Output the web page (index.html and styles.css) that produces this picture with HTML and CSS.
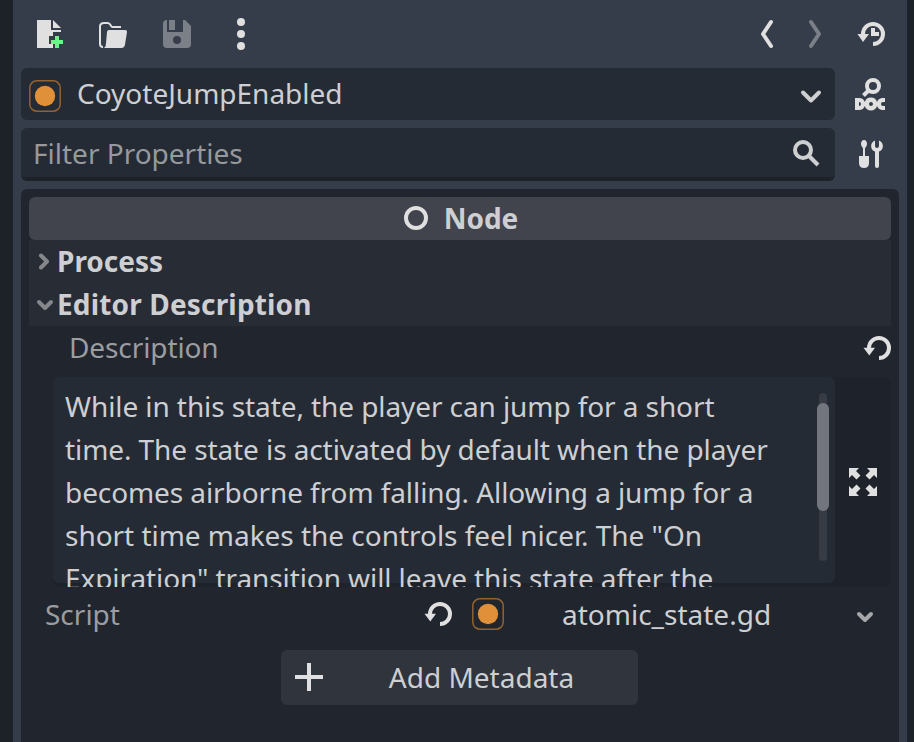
FILE: index.html
```html
<!DOCTYPE html>
<html lang="en">
<head>
<meta charset="utf-8">
<title>Inspector</title>
<link rel="stylesheet" href="styles.css">
</head>
<body>
<svg class="defs" aria-hidden="true">
  <symbol id="reload" viewBox="0 0 32 32">
    <path d="M8 16.500V16a10 10 0 1 1 10 10" fill="none" stroke="currentColor" stroke-width="4"/>
    <path d="M2.500 15.800h11.500L8.300 23.500z" fill="currentColor"/>
  </symbol>
  <symbol id="state" viewBox="0 0 32 32">
    <rect x=".8" y=".8" width="30.400" height="30.400" rx="7" fill="none" stroke="#94622f" stroke-width="1.500"/>
    <circle cx="16" cy="16" r="10.200" fill="#e09038"/>
  </symbol>
</svg>
<main class="dock">
  <header class="toolbar">
    <button class="tool"><svg class="icon" viewBox="0 0 32 32"><path d="M4 2h14v10h10v2h-8v4h-4v8h4v4H4z" fill="#e0e0e0"/><path d="M20 2v8h8z" fill="#e0e0e0"/><path d="M22 18h4v4h4v4h-4v4h-4v-4h-4v-4h4z" fill="#6cf585"/></svg></button>
    <button class="tool"><svg class="icon" viewBox="0 0 32 32"><path d="M6 29C4 29 3 28 3 26V8.500C3 6 4.500 5 7 5h3.500c2 0 2.500 1 3 2l.8 1.200c.3.500.7.800 1.500.8H24" fill="none" stroke="#e0e0e0" stroke-width="2"/><path d="M12 12h16c1.500 0 2.100.7 2 2l-2 12.500c-.4 2.300-1.400 3.500-3.500 3.500H6c2 0 2.600-1.500 2.900-3.500L10 14c.2-1.300.8-2 2-2z" fill="#e0e0e0"/></svg></button>
    <button class="tool"><svg class="icon" viewBox="0 0 32 32"><path fill="#7b7f87" fill-rule="evenodd" d="M6 2v12h16V2h2l6 6v18q0 4-4 4H6q-4 0-4-4V6q0-4 4-4zM16 18a4 4 0 1 0 0 8 4 4 0 0 0 0-8z"/><path d="M8 2h6v10H8z" fill="#7b7f87"/></svg></button>
    <button class="tool"><svg class="icon" viewBox="0 0 32 32"><g fill="#e0e0e0"><circle cx="16" cy="4" r="4"/><circle cx="16" cy="16" r="4"/><circle cx="16" cy="28" r="4"/></g></svg></button>
    <span class="spacer"></span>
    <button class="nav"><svg class="nav-icon" viewBox="0 0 16 32"><path d="M12 4L4 16l8 12" class="line"/></svg></button>
    <button class="nav nav-off"><svg class="nav-icon" viewBox="0 0 16 32"><path d="M4 4l8 12-8 12" class="line"/></svg></button>
    <button class="tool history"><svg class="icon" viewBox="0 0 32 32"><path d="M8 16a10 10 0 1 1 10 10" fill="none" stroke="#e0e0e0" stroke-width="4"/><path d="M2.500 16h11.500L8 24z" fill="#e0e0e0"/><path d="M16 10h4v4h4v4h-8z" fill="#e0e0e0"/></svg></button>
  </header>

  <div class="row">
    <div class="field select">
      <svg class="icon"><use href="#state"/></svg>
      <span class="select-name">CoyoteJumpEnabled</span>
      <svg class="icon select-arrow" viewBox="0 0 32 32"><path d="M8 12.500l8 8 8-8" class="line"/></svg>
    </div>
    <button class="tool"><svg class="icon" viewBox="0 0 32 32"><circle cx="18" cy="8" r="6" fill="none" stroke="#e0e0e0" stroke-width="4"/><path d="M14 12l-5.500 5.500" stroke="#e0e0e0" stroke-width="4"/><path d="M0 20h4a6 6 0 0 1 5.800 4A6.400 6.400 0 0 1 22 24a6 6 0 0 1 5-4h3v4h-2a2 2 0 0 0 0 4h2v4h-3a6 6 0 0 1-5-4A6.400 6.400 0 0 1 9.800 28 6 6 0 0 1 4 32H0zM4 24v4q2 0 2-2t-2-2zM16 24a2 2 0 1 0 0 4 2 2 0 0 0 0-4z" fill="#e0e0e0"/></svg></button>
  </div>

  <div class="row filter-row">
    <div class="field filter">
      <span>Filter Properties</span>
      <svg class="icon" viewBox="0 0 32 32"><circle cx="12" cy="12" r="8" fill="none" stroke="#cecfd1" stroke-width="4"/><path d="M17.500 17.500l9.500 9.500" stroke="#cecfd1" stroke-width="4"/></svg>
    </div>
    <button class="tool tools"><svg class="icon" viewBox="0 0 32 32"><g fill="#e0e0e0"><path d="M9 2c2 0 3 2 3 4 0 1.500-1 3-2 4v8h4v7q0 5-5 5t-5-5v-7h4v-8C7 9 6 7.500 6 6c0-2 1-4 3-4z"/><path d="M20 2.400V8q0 2 2 2t2-2V2.400A6 6 0 0 1 24 13.600V28q0 2-2 2t-2-2V13.600A6 6 0 0 1 20 2.400z"/></g></svg></button>
  </div>

  <section class="panel">
    <h2 class="category"><svg class="icon" viewBox="0 0 32 32"><circle cx="16" cy="16" r="10" fill="none" stroke="#e0e0e0" stroke-width="4"/></svg>Node</h2>
    <h3 class="group"><svg class="fold" viewBox="0 0 24 24"><path d="M8 5.500l6 6-6 6" class="line"/></svg>Process</h3>
    <h3 class="group group-open"><svg class="fold" viewBox="0 0 24 24"><path d="M6 9l6 6 6-6" class="line"/></svg>Editor Description</h3>
    <div class="property"><span>Description</span><svg class="icon revert"><use href="#reload"/></svg></div>
    <div class="editor">
      <div class="textarea">
        <p class="text">While in this state, the player can jump for a short<br>time. The state is activated by default when the player<br>becomes airborne from falling. Allowing a jump for a<br><span class="loose">short time makes the controls feel nicer. The "On</span><br>Expiration" transition will leave this state after the</p>
        <div class="scroll"><div class="thumb"></div></div>
      </div>
      <button class="expand"><svg class="icon" viewBox="0 0 32 32"><g fill="#e0e0e0"><path id="corner" d="M2 2h10L9 5l4.500 4.500-4 4L5 9l-3 3z"/><use href="#corner" transform="rotate(90 16 16)"/><use href="#corner" transform="rotate(180 16 16)"/><use href="#corner" transform="rotate(270 16 16)"/></g></svg></button>
    </div>
    <div class="script">
      <span class="script-label">Script</span>
      <svg class="icon"><use href="#reload"/></svg>
      <svg class="icon script-icon"><use href="#state"/></svg>
      <span class="script-name">atomic_state.gd</span>
      <svg class="fold script-arrow" viewBox="0 0 24 24"><path d="M6 9l6 6 6-6" class="line"/></svg>
    </div>
    <button class="add"><svg class="icon" viewBox="0 0 32 32"><path d="M14 1h4v12h12v4H18v12h-4V17H2v-4h12z" fill="#e0e0e0"/></svg><span>Add Metadata</span></button>
  </section>
</main>
</body>
</html>
```
FILE: styles.css
```css
* { box-sizing: border-box; }
body {
  margin: 0;
  height: 742px;
  overflow: hidden;
  padding: 0 7px 0 13px;
  background: #1d2229;
  color: #cdcfd2;
  font: 28px/43px "Noto Sans", sans-serif;
}
.defs { position: absolute; width: 0; height: 0; }
button {
  border: 0;
  padding: 0;
  background: none;
  color: inherit;
  font: inherit;
}
svg { display: block; flex: none; overflow: visible; }
.line {
  fill: none;
  stroke: currentColor;
  stroke-width: 4;
  stroke-linecap: round;
  stroke-linejoin: round;
}
.icon { width: 32px; height: 32px; color: #e0e0e0; }
.dock {
  display: flex;
  flex-direction: column;
  height: 742px;
  padding: 0 8px;
  background: #363d4a;
}
.toolbar { display: flex; align-items: center; gap: 8px; height: 68px; }
.tool { display: flex; flex: none; justify-content: center; width: 56px; }
.spacer { flex: 1; }
.nav { display: flex; justify-content: center; width: 40px; color: #e0e0e0; }
.nav-off { color: #7b7f87; }
.nav-icon { width: 16px; height: 32px; }
.row { display: flex; align-items: center; gap: 8px; height: 52px; margin-bottom: 8px; }
.filter-row { height: 53px; }
.field {
  display: flex;
  flex: 1;
  align-items: center;
  height: 100%;
  border-radius: 6px;
  background: #252b34;
}
.select { padding: 0 8px; }
.select > .icon:first-child { margin-top: 4px; }
.select-name { flex: 1; margin: -2px 0 0 16px; }
.select .select-arrow { color: #cecfd1; margin-top: 3px; }
.filter {
  justify-content: space-between;
  padding: 3px 12px 0;
  border-bottom: 4px solid #1d2229;
  color: #96999d;
}
.filter span { margin-top: -2px; }
.tools { margin-bottom: 2px; }
.panel {
  flex: 1;
  padding: 8px 8px 0;
  border-radius: 6px 6px 0 0;
  background: #21252e;
}
h2, h3 { margin: 0; font-size: 28px; font-weight: 700; }
.category {
  display: flex;
  align-items: center;
  justify-content: center;
  gap: 12px;
  height: 43px;
  padding-right: 2px;
  border-radius: 6px;
  background: #41444c;
}
.category .icon { margin-top: -1px; }
.group {
  display: flex;
  align-items: center;
  height: 43px;
  padding-left: 4px;
  background: #282c35;
}
.group-open { letter-spacing: .16px; }
.fold { width: 24px; height: 24px; color: #85878b; }
.property {
  display: flex;
  align-items: center;
  justify-content: space-between;
  height: 51px;
  padding: 0 0 8px 40px;
  color: #9b9da0;
  letter-spacing: -.1px;
}
.revert { margin-right: -2px; }
.editor {
  display: flex;
  height: 210px;
  margin-left: 24px;
  border-radius: 6px;
  background: #1e222a;
}
.textarea {
  display: flex;
  flex: 1;
  height: 206px;
  border-radius: 6px;
  background: #252b34;
}
.text {
  flex: 1;
  height: 210px;
  margin: 0;
  padding: 8px 0 0 12px;
  overflow: hidden;
  white-space: nowrap;
  letter-spacing: -.09px;
}
.loose { letter-spacing: -.03px; }
.scroll {
  width: 8px;
  height: 168px;
  margin: 16px 8px 0 0;
  padding-top: 10px;
  border-radius: 4px;
  background: #373b44;
}
.thumb {
  width: 12px;
  height: 108px;
  margin-left: -2px;
  border-radius: 6px;
  background: #72757d;
}
.expand { display: flex; align-items: center; justify-content: center; width: 56px; }
.script {
  display: flex;
  align-items: center;
  height: 55px;
  padding: 0 14px 0 16px;
}
.script-label { width: 377px; color: #9b9da0; }
.script .icon { margin-top: -1px; }
.script-icon { margin-left: 18px; }
.script-name { flex: 1; margin-left: 58px; }
.script-arrow { color: #a6a7aa; margin-top: 4px; }
.add {
  display: flex;
  align-items: center;
  width: 357px;
  height: 55px;
  margin: 8px 0 0 252px;
  padding: 0 12px;
  border-radius: 6px;
  background: #30343c;
}
.add span { flex: 1; text-align: center; padding-left: 12px; }
```
